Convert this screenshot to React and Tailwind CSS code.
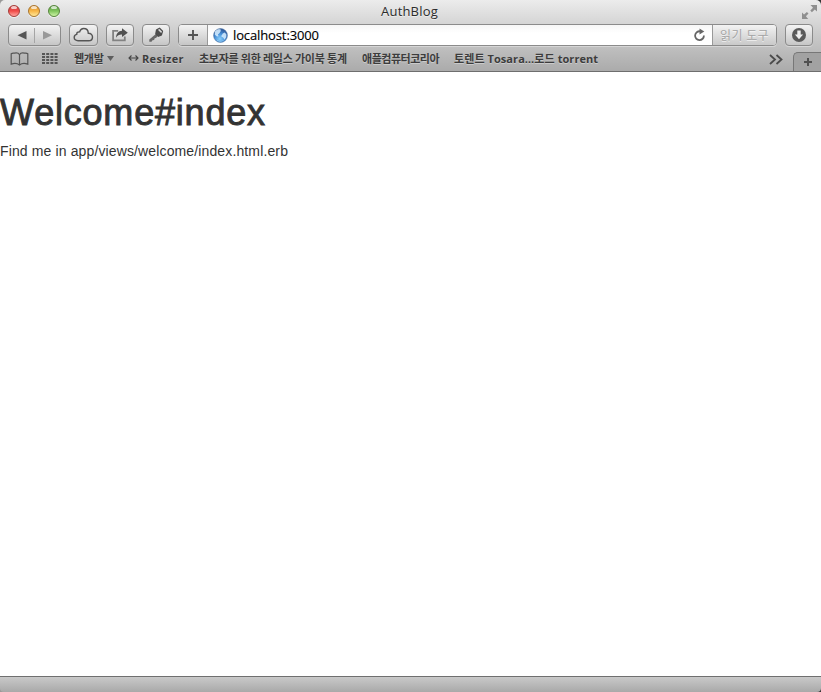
import React from 'react';

const BUTTON =
  'flex h-[22px] shrink-0 items-center justify-center rounded-[4px] border border-[#8b8b8b] bg-linear-to-b from-[#f3f3f3] to-[#c6c6c6] shadow-[0_1px_0_rgba(255,255,255,0.35)]';
const LUCIDA = "font-['Open_Sans','Noto_Sans_CJK_KR',sans-serif]";

function TrafficLight({ className }) {
  return (
    <span className={`relative block h-3 w-3 overflow-hidden rounded-full border shadow-[0_1px_0_rgba(255,255,255,0.6)] ${className}`}>
      <span className="absolute left-[2px] top-0 h-[3px] w-[6px] rounded-full bg-white/70" />
    </span>
  );
}

function TitleBar() {
  return (
    <div className="flex h-6 shrink-0 items-start justify-between">
      <div className="flex w-[120px] gap-2 pl-2 pt-[5px]">
        <TrafficLight className="border-[#a33c38] bg-linear-to-b from-[#cf4040] via-[#f04a48] to-[#ffa3a0]" />
        <TrafficLight className="border-[#a8742c] bg-linear-to-b from-[#d98e2c] via-[#f8b646] to-[#ffe996]" />
        <TrafficLight className="border-[#55843b] bg-linear-to-b from-[#5a9a40] via-[#80c55c] to-[#cdf5a5]" />
      </div>
      <h2 className="-ml-[2px] pt-px text-[13px] leading-[21px] tracking-[0.18px] text-[#2b2b2b] [text-shadow:0_1px_0_rgba(255,255,255,0.5)]">AuthBlog</h2>
      <div className="flex w-[120px] justify-end pr-[4px] pt-[4px]">
        <svg width="15" height="16" viewBox="0 0 15 16" fill="#8f8f8f">
          <path d="M8.500 1H15v6.500l-2.200-1.900-2.900 2.600-1.600-1.600 2.700-2.800z" />
          <path d="M0 8.500l2 1.900 2.900-2.500 1.600 1.600-2.600 2.800L6.200 15H0z" />
        </svg>
      </div>
    </div>
  );
}

function ShareIcon() {
  return (
    <svg width="18" height="16" viewBox="0 0 18 16">
      <path d="M7.200 3.800H2.100v9.600h11.700V9.600" fill="none" stroke="#828282" strokeWidth="1.800" />
      <path d="M11 1.200l5.800 4.600L11 10.100V7.500C8.200 7.400 6.500 8.300 5 10.700C5.300 6.500 7.300 4 11 3.800z" fill="#515151" />
    </svg>
  );
}

function KeyIcon() {
  return (
    <svg width="16" height="16" viewBox="0 0 16 16">
      <path d="M8.500 6.500L1.300 12.500v2.300h2.200l1-1.600 1.600-.2.600-1.700 1.300-.3L9.800 9z" fill="#676767" />
      <path d="M8 2.500l3.700-1.900 3.500 3.300-1.300 4.500-3.700 1.700L7.100 7z" fill="#4c4c4c" />
      <path d="M10.600 2.400l3 2.900" stroke="#d8d8d8" strokeWidth="1.600" />
    </svg>
  );
}

function Globe() {
  return (
    <svg width="15" height="15" viewBox="0 0 15 15">
      <defs>
        <radialGradient id="globe" cx="45%" cy="75%" r="70%">
          <stop offset="0" stopColor="#8bd0fb" />
          <stop offset=".55" stopColor="#468fd8" />
          <stop offset="1" stopColor="#315c9d" />
        </radialGradient>
      </defs>
      <circle cx="7.500" cy="7.500" r="6.900" fill="url(#globe)" stroke="#496f9e" strokeWidth=".6" />
      <path d="M2 3.500C3.500 1.500 5.500 1 7.500 1.300L7.800 3 6.400 5.200 4.900 6.600 5.600 8.200 4 8.600 1.800 6.800zM9.800 5.600l2-1.200 1.600 2.200-.2 2.700-1.800 2.400-1-1.900-2.300-1.500z" fill="#d8efff" opacity=".85" />
      <path d="M3.500 11.800c2.300 1.700 5.200 1.800 7.500.3-1 1.500-6.200 2-7.500-.3z" fill="#c9efff" opacity=".8" />
    </svg>
  );
}

function Toolbar() {
  return (
    <div className="flex h-[22px] shrink-0 items-center pl-2 pr-2">
      <div className={`${BUTTON} w-[53px]`}>
        <svg width="51" height="20" viewBox="0 0 51 20">
          <path d="M17.500 6v8.500L8.500 10.250z" fill="#555" />
          <path d="M25.500 3v15" stroke="#a5a5a5" />
          <path d="M34 6v8.500l9-4.250z" fill="#999" />
        </svg>
      </div>
      <div className={`${BUTTON} ml-2 w-[29px]`}>
        <svg width="21" height="16" viewBox="0 0 21 16">
          <path d="M5 13.700C2.700 13.700 1.200 12.400 1.200 10.400c0-1.600 1-2.700 2.500-3-.1-1.700 1.200-2.800 2.900-2.500C7.300 2.700 8.800 1.500 10.600 1.500c2.700 0 4.600 2 4.700 4.700 2.400-.1 4.200 1.500 4.200 3.700 0 2.300-1.700 3.800-3.900 3.800z" fill="none" stroke="#555" strokeWidth="1.400" />
        </svg>
      </div>
      <div className={`${BUTTON} ml-2 w-[28px]`}><ShareIcon /></div>
      <div className={`${BUTTON} ml-2 w-[28px]`}><KeyIcon /></div>
      <div className="ml-2 flex h-[22px] w-[599px] shrink-0 overflow-hidden rounded-[4px] border border-[#8b8b8b] bg-white shadow-[0_1px_0_rgba(255,255,255,0.35)]">
        <div className="flex w-[29px] shrink-0 items-center justify-center border-r border-[#999] bg-linear-to-b from-[#f3f3f3] to-[#c6c6c6]">
          <svg width="12" height="12" viewBox="0 0 12 12"><path d="M6 1v10M1 6h10" stroke="#555" strokeWidth="1.900" /></svg>
        </div>
        <div className="flex flex-1 items-center bg-linear-to-b from-[#f6f6f6] to-white to-40% pl-[5px] pr-[6px]">
          <Globe />
          <span className="ml-[5px] text-[13px] leading-5 tracking-[-0.12px] text-black [-webkit-text-stroke:0.15px_#000]">localhost:3000</span>
          <svg className="ml-auto" width="13" height="14" viewBox="0 0 13 14">
            <path d="M10.900 7.500A4.400 4.400 0 1 1 7.200 3.300" fill="none" stroke="#666" strokeWidth="1.800" />
            <path d="M6.500.5l4.800 3-4.800 3z" fill="#666" />
          </svg>
        </div>
        <div className="flex w-[64px] shrink-0 items-center justify-center whitespace-nowrap border-l border-[#999] bg-linear-to-b from-[#f3f3f3] to-[#c9c9c9] pt-px text-[12px] leading-5 tracking-[0.3px] text-[#a4a4a4] [text-shadow:0_1px_0_rgba(255,255,255,0.7)]">읽기 도구</div>
      </div>
      <div className={`${BUTTON} ml-2 w-[28px]`}>
        <svg width="16" height="16" viewBox="0 0 16 16">
          <circle cx="8" cy="8" r="7" fill="#5a5a5a" />
          <path d="M6.300 3.500h3.400v4h2.400L8 12.300 3.900 7.500h2.400z" fill="#eee" />
        </svg>
      </div>
    </div>
  );
}

function Bookmarks() {
  return (
    <nav className="mt-[2px] flex h-[24px] shrink-0 items-start border-b border-[#6e6e6e] text-[11px] font-bold leading-[22px] text-[#3c3c3c] [text-shadow:0_1px_0_rgba(255,255,255,0.35)]">
      <svg className="ml-[10px] mt-[4px] shrink-0" width="19" height="14" viewBox="0 0 19 14" fill="none" stroke="#565656" strokeWidth="1.200">
        <path d="M9.500 2.700C8.500 1 6.200.8 4.500 1.200 3 .9 2.100 1 1.200 1.700v10.400c2.500-.8 6-1 8.300.9 2.300-1.900 5.800-1.700 8.300-.9V1.700C16.900 1 16 .9 14.500 1.200c-1.700-.4-4-.2-5 1.500zM9.500 2.700v10.200" />
      </svg>
      <svg className="ml-[13px] mt-[5px] shrink-0" width="16" height="12" viewBox="0 0 16 12">
        <path d="M0 1h16M0 4h16M0 7h16M0 10h16" stroke="#555" strokeWidth="2" strokeDasharray="3 1.200" />
      </svg>
      <span className="ml-[16px] w-[33px] shrink-0 whitespace-nowrap tracking-[-0.3px]">웹개발</span>
      <svg className="mt-[8px] shrink-0" width="7" height="6" viewBox="0 0 7 6"><path d="M0 0h7L3.500 5z" fill="#5d5d5d" /></svg>
      <svg className="ml-[14px] mt-[6px] shrink-0" width="11" height="8" viewBox="0 0 11 8" fill="none" stroke="#444" strokeWidth="1.100"><path d="M1 4h9M3.500 1.500L1 4l2.500 2.500M7.500 1.500L10 4 7.500 6.500" /></svg>
      <span className="ml-[3px] w-[57px] shrink-0 whitespace-nowrap tracking-[0.35px]">Resizer</span>
      <span className="w-[163px] shrink-0 whitespace-nowrap tracking-[-0.3px]">초보자를 위한 레일스 가이북 통계</span>
      <span className="w-[92px] shrink-0 whitespace-nowrap tracking-[-0.48px]">애플컴퓨터코리아</span>
      <span className="shrink-0 whitespace-nowrap tracking-[0.07px]">토렌트 Tosara…로드 torrent</span>
      <svg className="ml-auto mt-[6px] shrink-0" width="14" height="11" viewBox="0 0 14 11" fill="none" stroke="#4b4b4b" strokeWidth="1.800"><path d="M1 1l5 4.500L1 10M7.500 1l5 4.500-5 4.500" /></svg>
      <div className="ml-[10px] mt-[4px] flex h-[19px] w-[28px] shrink-0 items-center justify-center rounded-tl-[5px] border-l border-t border-[#777] bg-[#a2a2a2]">
        <svg width="10" height="10" viewBox="0 0 10 10"><path d="M5 1v8M1 5h8" stroke="#505050" strokeWidth="2" /></svg>
      </div>
    </nav>
  );
}

export default function App() {
  return (
    <div className="flex h-[692px] w-[821px] flex-col overflow-hidden bg-linear-to-r from-[#999] to-[#333]">
      <header className={`flex h-[72px] shrink-0 flex-col rounded-t-[5px] bg-linear-to-b from-[#ececec] via-[#c9c9c9] via-50% to-[#aaaaaa] ${LUCIDA}`}>
        <TitleBar />
        <Toolbar />
        <Bookmarks />
      </header>
      <main className="flex-1 bg-white pt-[21px] font-['Liberation_Sans',Arial,sans-serif] text-[#333]">
        <h1 className="text-[36px] font-medium leading-[40px] tracking-[0.8px] [-webkit-text-stroke:0.9px_#333]">Welcome#index</h1>
        <p className="mt-[8px] text-[14px] leading-[20px] tracking-[0.13px]">Find me in app/views/welcome/index.html.erb</p>
      </main>
      <footer className="h-[16px] shrink-0 rounded-b-[4px] border-t border-[#6f6f6f] bg-linear-to-b from-[#c9c9c9] to-[#a9a9a9]" />
    </div>
  );
}
